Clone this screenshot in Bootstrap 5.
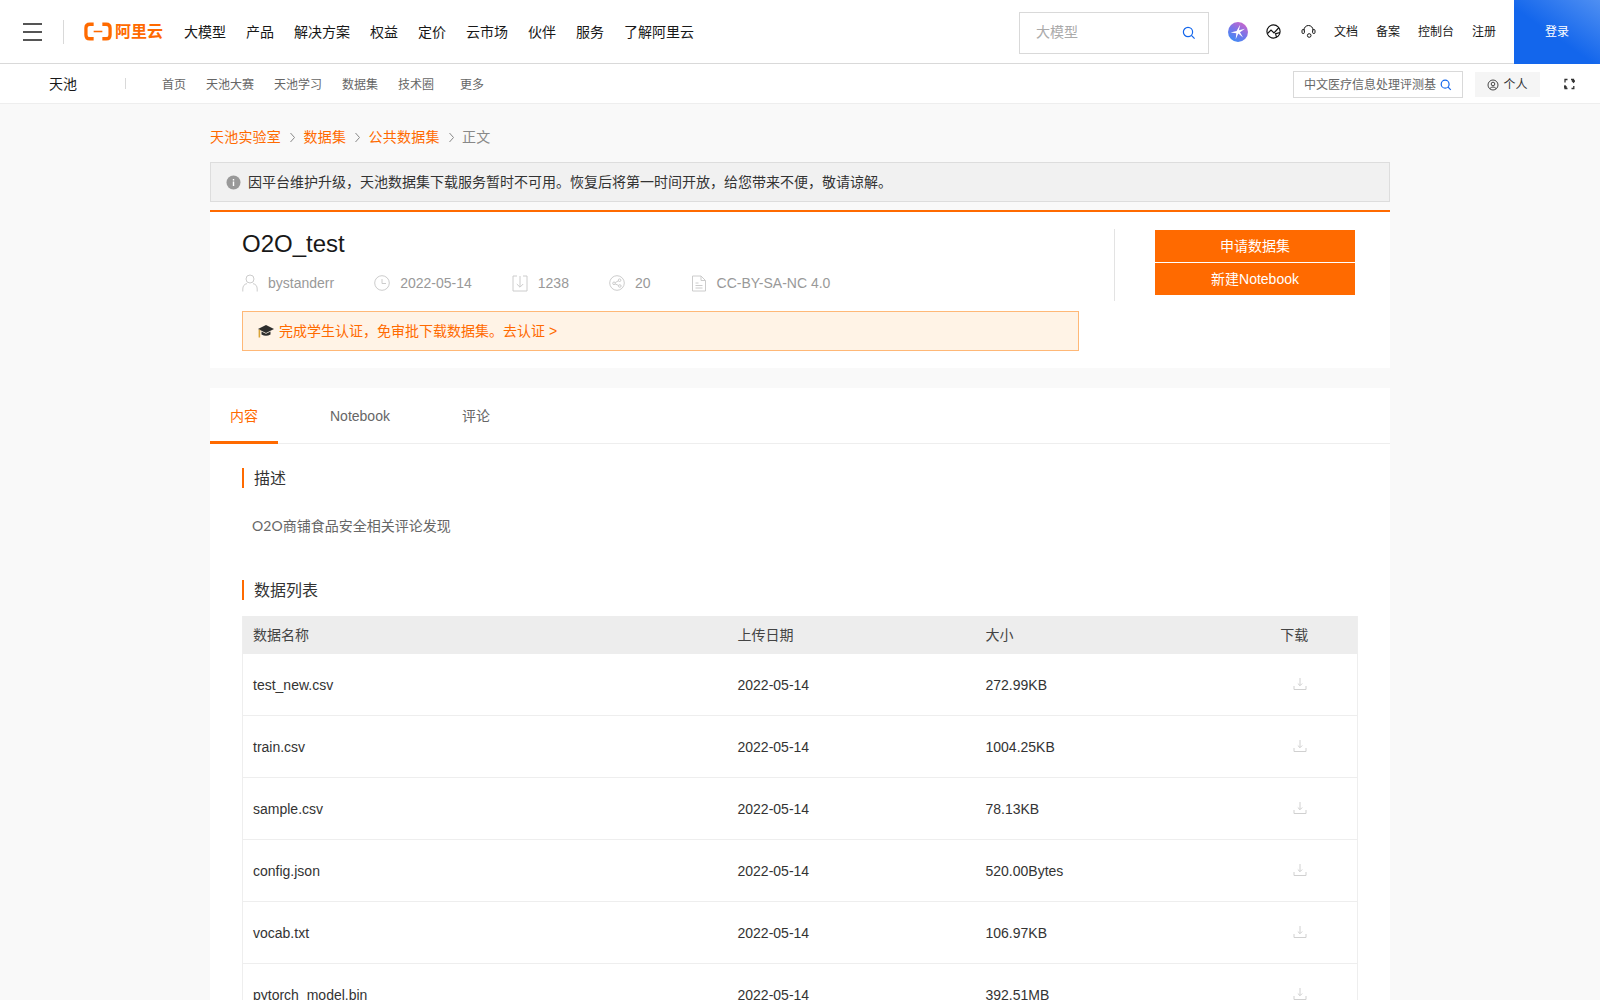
<!DOCTYPE html>
<html lang="zh-CN">
<head>
<meta charset="utf-8">
<title>O2O_test</title>
<link href="https://cdn.jsdelivr.net/npm/bootstrap@5.3.0/dist/css/bootstrap.min.css" rel="stylesheet">
<style>
:root{--orange:#ff6a00;}
html,body{height:1000px;overflow:hidden;}
body{background:#f9f9f9;font-family:"Liberation Sans","Noto Sans CJK SC",sans-serif;font-size:14px;color:#333;}
a{text-decoration:none;}
.topbar{height:64px;background:#fff;border-bottom:1px solid #d9d9d9;}
.burger{width:19px;margin-left:23px;}
.burger i{display:block;height:2px;background:#555;margin-bottom:6px;}
.burger i:last-child{margin-bottom:0;}
.vsep{width:1px;height:24px;background:#d9d9d9;margin-left:21px;margin-right:20px;}
.brandmark{width:80px;height:22px;color:var(--orange);font-weight:700;font-size:16px;line-height:22px;white-space:nowrap;gap:3px;}
.mainnav{margin-left:20px;gap:20px;margin-top:2px;}
.mainnav a{color:#181818;font-size:14px;white-space:nowrap;}
.bigsearch{width:190px;height:42px;margin-left:auto;margin-top:2px;border:1px solid #d9d9d9;padding:0 12px 0 16px;color:#aaa;font-size:14px;}
.toolset{margin-left:19px;margin-right:18px;}
.toolset a{color:#181818;font-size:12px;white-space:nowrap;margin-left:18px;margin-top:1px;}
.globeicon{margin-left:18px;}
.phoneicon{margin-left:20px;}
.loginbtn{width:86px;height:64px;background:linear-gradient(215deg,#4f8ff2 0%,#1366ec 55%);color:#fff;font-size:12px;}
.subbar{height:40px;background:#fff;border-bottom:1px solid #eee;}
.subtitle{margin-left:49px;width:76px;font-size:14px;color:#181818;margin-top:2px;}
.subsep{width:1px;height:11px;background:#d9d9d9;}
.subnav{margin-top:2px;}
.subnav a{color:#666;font-size:12px;white-space:nowrap;}
.sub1{margin-left:36px;}
.sub2{margin-left:20px;}
.sub3{margin-left:20px;}
.sub4{margin-left:20px;}
.sub5{margin-left:20px;}
.sub6{margin-left:26px;}
.smallsearch{width:170px;height:27px;margin-left:auto;margin-top:2px;border:1px solid #d9d9d9;padding:0 10px;color:#666;font-size:12px;white-space:nowrap;overflow:hidden;}
.personal{width:65px;height:25px;margin-left:12px;margin-top:2px;background:#f5f5f5;color:#333;font-size:12px;}
.switcher{margin-left:24px;margin-right:25px;margin-top:1px;}
.pagewrap{width:1180px;margin:0 auto;}
.crumbs{height:58px;padding-top:21px;font-size:14px;line-height:24px;color:#888;letter-spacing:.2px;}
.crumbs a{color:var(--orange);}
.crumbs svg{margin:0 7.5px 0 8px;}
.noticebar{height:40px;background:#f1f1f1;border:1px solid #ddd;padding-left:15px;color:#333;font-size:14px;gap:7px;}
.headcard{margin-top:8px;height:158px;background:#fff;border-top:2px solid var(--orange);padding:0 34px 0 32px;}
.headleft{width:837px;}
.dstitle{font-size:24px;line-height:32px;font-weight:400;color:#181818;margin:16px 0 0;}
.metaline{height:24px;margin-top:11px;color:#999;font-size:14px;}
.metaitem{margin-right:40px;gap:10px;}
.certbox{height:40px;margin-top:16px;border:1px solid #ffb877;background:#fff3e6;padding-left:15px;color:var(--orange);font-size:14px;gap:5px;}
.certbox span{margin-top:1px;}
.headright{margin-left:35px;margin-top:17px;height:72px;border-left:1px solid #e3e3e3;padding-left:40px;flex:1;}
.actbtn{display:block;width:200px;height:32px;line-height:32px;padding:0;border:0;border-radius:0;background:var(--orange);color:#fff;font-size:14px;margin-top:1px;}
.actbtn:hover{background:var(--orange);color:#fff;}
.bodycard{margin-top:20px;background:#fff;height:700px;}
.tabstrip{height:56px;border-bottom:1px solid #eee;}
.tabitem{height:56px;line-height:57px;color:#666;font-size:14px;}
.tabitem.on{width:68px;text-align:center;color:var(--orange);border-bottom:3px solid var(--orange);}
.tabnb{margin-left:52px;}
.tabcm{margin-left:72px;}
.sectionhead{margin:24px 0 0 32px;height:20px;border-left:2px solid var(--orange);padding-left:10px;font-size:16px;line-height:21px;color:#333;}
.descline{margin:28px 0 0 42px;height:20px;line-height:20px;color:#666;font-size:14px;}
.descline b{font-family:"Lato",sans-serif;font-weight:400;letter-spacing:.1px;}
.sect2{margin-top:44px;}
.gridwrap{margin:16px 32px 0;}
.dtable{table-layout:fixed;width:1116px;margin:0;border:1px solid #eee;border-top:0;color:#333;font-size:14px;}
.dtable th{height:38px;padding:0 10px;background:#ededed;font-weight:400;color:#444;vertical-align:middle;border:0;}
.dtable td{height:62px;padding:2px 10px 0;vertical-align:middle;border-bottom:1px solid #eee;color:#333;background:#fff;}
.dtable tbody tr:first-child td{height:61px;}
.dlcell{text-align:center;padding-left:30px!important;}
.dlcell svg{vertical-align:-1px;}
.dlhead{text-align:center;padding-left:18px!important;}
</style>
</head>
<body>
<header class="topbar d-flex align-items-center">
  <div class="burger"><i></i><i></i><i></i></div>
  <div class="vsep"></div>
  <a href="#" class="brandmark d-flex align-items-center">
    <svg width="28" height="19" viewBox="0 0 29 19" fill="none" class="flex-shrink-0"><path d="M10 2H6Q2 2 2 6V13Q2 17 6 17H10" stroke="#ff6a00" stroke-width="3.4"/><path d="M19 2H23Q27 2 27 6V13Q27 17 23 17H19" stroke="#ff6a00" stroke-width="3.4"/><path d="M10 9.5H19" stroke="#ff6a00" stroke-width="1.6"/></svg>
    <span>阿里云</span>
  </a>
  <nav class="mainnav d-flex">
    <a href="#">大模型</a><a href="#">产品</a><a href="#">解决方案</a><a href="#">权益</a><a href="#">定价</a><a href="#">云市场</a><a href="#">伙伴</a><a href="#">服务</a><a href="#">了解阿里云</a>
  </nav>
  <div class="bigsearch d-flex align-items-center justify-content-between">
    <span>大模型</span>
    <svg width="14" height="14" viewBox="0 0 14 14" fill="none" stroke="#1366ec" stroke-width="1.2"><circle cx="6" cy="6" r="4.6"/><path d="M9.4 9.4L12.6 12.6"/></svg>
  </div>
  <div class="toolset d-flex align-items-center">
    <svg width="20" height="20" viewBox="0 0 20 20"><defs><linearGradient id="gs" x1="0.85" y1="0" x2="0.25" y2="1"><stop offset="0" stop-color="#d463c8"/><stop offset=".5" stop-color="#7a74e8"/><stop offset="1" stop-color="#3d8cf5"/></linearGradient></defs><circle cx="10" cy="10" r="10" fill="url(#gs)"/><path d="M12.3 2.6L10.9 8.3L17 6.8L12 10.2L15 15.4L10.3 11.4L7.7 17.2L8.3 11.2L2.6 10.6L8.6 8.9Z" fill="#fff"/></svg>
    <svg class="globeicon" width="15" height="15" viewBox="0 0 15 15" fill="none" stroke="#111" stroke-width="1.15"><circle cx="7.5" cy="7.5" r="6.6"/><path d="M1.5 9.5L5 6L8 9L13 3.5"/><path d="M10.5 13.4L9.6 9.6L13.9 8.6"/></svg>
    <svg class="phoneicon" width="15" height="15" viewBox="0 0 15 15" fill="none" stroke="#111" stroke-width="1"><path d="M3 6.5V6A4.5 4.5 0 0 1 12 6V6.5"/><rect x="1" y="5.5" width="2.4" height="4" rx="1.1"/><rect x="11.6" y="5.5" width="2.4" height="4" rx="1.1"/><circle cx="8.2" cy="11.5" r="1.8"/></svg>
    <a href="#">文档</a>
    <a href="#">备案</a>
    <a href="#">控制台</a>
    <a href="#">注册</a>
  </div>
  <a href="#" class="loginbtn d-flex align-items-center justify-content-center">登录</a>
</header>

<div class="subbar d-flex align-items-center">
  <div class="subtitle">天池</div>
  <div class="subsep"></div>
  <nav class="subnav d-flex">
    <a href="#" class="sub1">首页</a><a href="#" class="sub2">天池大赛</a><a href="#" class="sub3">天池学习</a><a href="#" class="sub4">数据集</a><a href="#" class="sub5">技术圈</a><a href="#" class="sub6">更多</a>
  </nav>
  <div class="smallsearch d-flex align-items-center justify-content-between">
    <span>中文医疗信息处理评测基</span>
    <svg class="flex-shrink-0" width="12" height="12" viewBox="0 0 14 14" fill="none" stroke="#1366ec" stroke-width="1.4"><circle cx="6" cy="6" r="4.6"/><path d="M9.4 9.4L12.6 12.6"/></svg>
  </div>
  <div class="personal d-flex align-items-center justify-content-center gap-1">
    <svg width="12" height="12" viewBox="0 0 12 12" fill="none" stroke="#333" stroke-width=".9"><circle cx="6" cy="6" r="5"/><circle cx="6" cy="5" r="1.8"/><path d="M2.8 9.6Q6 6.4 9.2 9.6"/></svg>
    <span>个人</span>
  </div>
  <div class="switcher">
    <svg class="d-block" width="11" height="12" viewBox="0 0 11 12" fill="none" stroke="#333" stroke-width="1.3"><path d="M3.5 1.5H1V4.5M7 1.5H9.5V3.5M8 2.5L9.5 4.2L11 2.5M9.8 8V10.5H7.5M3.5 10.5H1V8.5M-.2 9.5L1 7.8L2.6 9.5"/></svg>
  </div>
</div>

<main class="pagewrap">
  <div class="crumbs d-flex align-items-start">
    <a href="#">天池实验室</a>
    <svg width="7" height="24" viewBox="0 0 7 24" fill="none" stroke="#888"><path d="M1.5 8L5.5 12.5L1.5 17"/></svg>
    <a href="#">数据集</a>
    <svg width="7" height="24" viewBox="0 0 7 24" fill="none" stroke="#888"><path d="M1.5 8L5.5 12.5L1.5 17"/></svg>
    <a href="#">公共数据集</a>
    <svg width="7" height="24" viewBox="0 0 7 24" fill="none" stroke="#888"><path d="M1.5 8L5.5 12.5L1.5 17"/></svg>
    <span>正文</span>
  </div>
  <div class="noticebar d-flex align-items-center">
    <svg width="15" height="15" viewBox="0 0 15 15" class="flex-shrink-0"><circle cx="7.5" cy="7.5" r="7" fill="#999"/><rect x="6.8" y="6.5" width="1.4" height="4.5" fill="#fff"/><rect x="6.8" y="4" width="1.4" height="1.5" fill="#fff"/></svg>
    <span>因平台维护升级，天池数据集下载服务暂时不可用。恢复后将第一时间开放，给您带来不便，敬请谅解。</span>
  </div>

  <section class="headcard d-flex">
    <div class="headleft">
      <h1 class="dstitle">O2O_test</h1>
      <div class="metaline d-flex align-items-center">
        <div class="metaitem d-flex align-items-center">
          <svg width="16" height="18" viewBox="0 0 16 18" fill="none" stroke="#ccc"><circle cx="8" cy="5" r="4"/><path d="M.8 17.5V15Q.8 10.5 5 9.6M15.2 17.5V15Q15.2 10.5 11 9.6"/></svg>
          <span>bystanderr</span>
        </div>
        <div class="metaitem d-flex align-items-center">
          <svg width="16" height="16" viewBox="0 0 16 16" fill="none" stroke="#ccc"><circle cx="8" cy="8" r="7.3"/><path d="M8 4V8.5H12"/></svg>
          <span>2022-05-14</span>
        </div>
        <div class="metaitem d-flex align-items-center">
          <svg width="16" height="17" viewBox="0 0 16 17" fill="none" stroke="#ccc"><path d="M5 1H1V16H15V1H11"/><path d="M8 1V12M4.8 9L8 12.2L11.2 9"/></svg>
          <span>1238</span>
        </div>
        <div class="metaitem d-flex align-items-center">
          <svg width="16" height="16" viewBox="0 0 16 16" fill="none" stroke="#ccc"><circle cx="8" cy="8" r="7.3"/><circle cx="5" cy="8.3" r="1.3"/><circle cx="10.6" cy="5.2" r="1.3"/><circle cx="10.8" cy="11" r="1.3"/><path d="M6.2 7.6L9.5 5.8M6.2 9L9.6 10.4"/></svg>
          <span>20</span>
        </div>
        <div class="metaitem d-flex align-items-center">
          <svg width="16" height="17" viewBox="0 0 15 17" fill="none" stroke="#ccc"><path d="M1 1H9.5L14 5.5V16H1Z"/><path d="M9.5 1V5.5H14M4 8H7M4 10.5H11M4 13H11"/></svg>
          <span>CC-BY-SA-NC 4.0</span>
        </div>
      </div>
      <div class="certbox d-flex align-items-center">
        <svg width="16" height="15" viewBox="0 0 16 15" class="flex-shrink-0"><path d="M8 1L16 5L8 9L0 5Z" fill="#2d2d2d"/><path d="M3.5 7.5V10.5Q8 13 12.5 10.5V7.5L8 9.8Z" fill="#2d2d2d"/><path d="M1.4 5.6V13.5" stroke="#d9a437" stroke-width="1.6"/></svg>
        <span>完成学生认证，免审批下载数据集。去认证 &gt;</span>
      </div>
    </div>
    <div class="headright">
      <a href="#" class="btn actbtn">申请数据集</a>
      <a href="#" class="btn actbtn">新建Notebook</a>
    </div>
  </section>

  <section class="bodycard">
    <div class="tabstrip d-flex">
      <a href="#" class="tabitem on">内容</a>
      <a href="#" class="tabitem tabnb">Notebook</a>
      <a href="#" class="tabitem tabcm">评论</a>
    </div>
    <div class="sectionhead">描述</div>
    <div class="descline"><b>O2O</b>商铺食品安全相关评论发现</div>
    <div class="sectionhead sect2">数据列表</div>
    <div class="gridwrap">
      <table class="table dtable">
        <colgroup><col style="width:485px"><col style="width:248px"><col style="width:248px"><col></colgroup>
        <thead><tr><th>数据名称</th><th>上传日期</th><th>大小</th><th class="dlhead">下载</th></tr></thead>
        <tbody>
          <tr><td>test_new.csv</td><td>2022-05-14</td><td>272.99KB</td><td class="dlcell"><svg width="14" height="14" viewBox="0 0 14 14" fill="none" stroke="#d0d0d0"><path d="M7 1V8.5M4.8 6.5L7 8.7L9.2 6.5M1 9V12.5H13V9"/></svg></td></tr>
          <tr><td>train.csv</td><td>2022-05-14</td><td>1004.25KB</td><td class="dlcell"><svg width="14" height="14" viewBox="0 0 14 14" fill="none" stroke="#d0d0d0"><path d="M7 1V8.5M4.8 6.5L7 8.7L9.2 6.5M1 9V12.5H13V9"/></svg></td></tr>
          <tr><td>sample.csv</td><td>2022-05-14</td><td>78.13KB</td><td class="dlcell"><svg width="14" height="14" viewBox="0 0 14 14" fill="none" stroke="#d0d0d0"><path d="M7 1V8.5M4.8 6.5L7 8.7L9.2 6.5M1 9V12.5H13V9"/></svg></td></tr>
          <tr><td>config.json</td><td>2022-05-14</td><td>520.00Bytes</td><td class="dlcell"><svg width="14" height="14" viewBox="0 0 14 14" fill="none" stroke="#d0d0d0"><path d="M7 1V8.5M4.8 6.5L7 8.7L9.2 6.5M1 9V12.5H13V9"/></svg></td></tr>
          <tr><td>vocab.txt</td><td>2022-05-14</td><td>106.97KB</td><td class="dlcell"><svg width="14" height="14" viewBox="0 0 14 14" fill="none" stroke="#d0d0d0"><path d="M7 1V8.5M4.8 6.5L7 8.7L9.2 6.5M1 9V12.5H13V9"/></svg></td></tr>
          <tr><td>pytorch_model.bin</td><td>2022-05-14</td><td>392.51MB</td><td class="dlcell"><svg width="14" height="14" viewBox="0 0 14 14" fill="none" stroke="#d0d0d0"><path d="M7 1V8.5M4.8 6.5L7 8.7L9.2 6.5M1 9V12.5H13V9"/></svg></td></tr>
        </tbody>
      </table>
    </div>
  </section>
</main>
<script src="https://cdn.jsdelivr.net/npm/bootstrap@5.3.0/dist/js/bootstrap.bundle.min.js"></script>
</body>
</html>
